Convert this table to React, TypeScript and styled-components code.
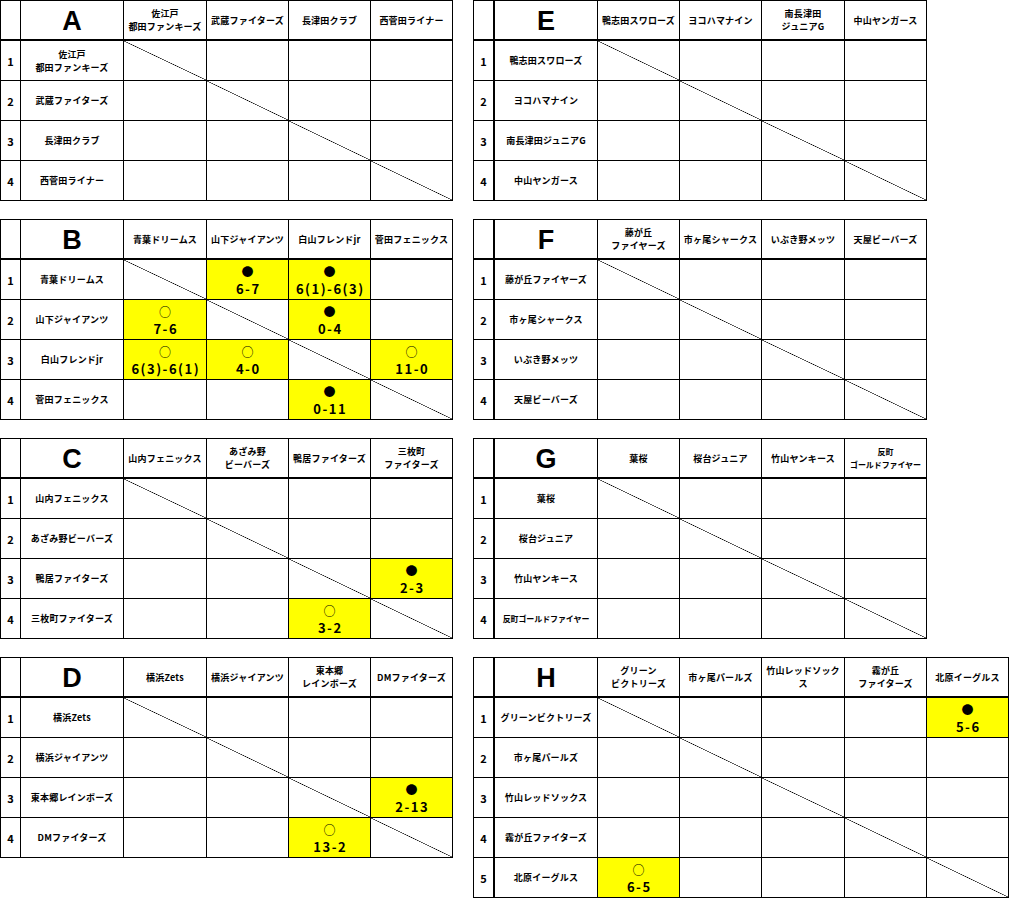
import React from "react";
import styled, { createGlobalStyle, css } from "styled-components";

const GlobalStyle = createGlobalStyle`
  html, body { margin: 0; padding: 0; background: #ffffff; }
  body {
    font-family: "Noto Sans CJK JP", "Noto Sans", sans-serif;
    color: #000000;
    width: 1010px;
  }
`;

type Mark = "win" | "lose";
type Result = { mark: Mark; score: string };
type Team = { head: string[]; row: string[]; small?: boolean };
type GroupData = {
  letter: string;
  teams: Team[];
  results: Record<string, Result>;
};

const t = (name: string, head?: string[], row?: string[], small?: boolean): Team => ({
  head: head ?? [name],
  row: row ?? [name],
  small,
});

const leftGroups: GroupData[] = [
  {
    letter: "A",
    teams: [
      t("佐江戸都田ファンキーズ", ["佐江戸", "都田ファンキーズ"], ["佐江戸", "都田ファンキーズ"]),
      t("武蔵ファイターズ"),
      t("長津田クラブ"),
      t("西菅田ライナー"),
    ],
    results: {},
  },
  {
    letter: "B",
    teams: [t("青葉ドリームス"), t("山下ジャイアンツ"), t("白山フレンドjr"), t("菅田フェニックス")],
    results: {
      "0-1": { mark: "lose", score: "6-7" },
      "0-2": { mark: "lose", score: "6(1)-6(3)" },
      "1-0": { mark: "win", score: "7-6" },
      "1-2": { mark: "lose", score: "0-4" },
      "2-0": { mark: "win", score: "6(3)-6(1)" },
      "2-1": { mark: "win", score: "4-0" },
      "2-3": { mark: "win", score: "11-0" },
      "3-2": { mark: "lose", score: "0-11" },
    },
  },
  {
    letter: "C",
    teams: [
      t("山内フェニックス"),
      t("あざみ野ビーバーズ", ["あざみ野", "ビーバーズ"]),
      t("鴨居ファイターズ"),
      t("三枚町ファイターズ", ["三枚町", "ファイターズ"]),
    ],
    results: {
      "2-3": { mark: "lose", score: "2-3" },
      "3-2": { mark: "win", score: "3-2" },
    },
  },
  {
    letter: "D",
    teams: [
      t("横浜Zets"),
      t("横浜ジャイアンツ"),
      t("東本郷レインボーズ", ["東本郷", "レインボーズ"]),
      t("DMファイターズ"),
    ],
    results: {
      "2-3": { mark: "lose", score: "2-13" },
      "3-2": { mark: "win", score: "13-2" },
    },
  },
];

const rightGroups: GroupData[] = [
  {
    letter: "E",
    teams: [
      t("鴨志田スワローズ"),
      t("ヨコハマナイン"),
      t("南長津田ジュニアG", ["南長津田", "ジュニアG"]),
      t("中山ヤンガース"),
    ],
    results: {},
  },
  {
    letter: "F",
    teams: [
      t("藤が丘ファイヤーズ", ["藤が丘", "ファイヤーズ"]),
      t("市ヶ尾シャークス"),
      t("いぶき野メッツ"),
      t("天屋ビーバーズ"),
    ],
    results: {},
  },
  {
    letter: "G",
    teams: [
      t("葉桜"),
      t("桜台ジュニア"),
      t("竹山ヤンキース"),
      t("反町ゴールドファイヤー", ["反町", "ゴールドファイヤー"], undefined, true),
    ],
    results: {},
  },
  {
    letter: "H",
    teams: [
      t("グリーンビクトリーズ", ["グリーン", "ビクトリーズ"]),
      t("市ヶ尾パールズ"),
      t("竹山レッドソックス", ["竹山レッドソック", "ス"]),
      t("霧が丘ファイターズ", ["霧が丘", "ファイターズ"]),
      t("北原イーグルス"),
    ],
    results: {
      "0-4": { mark: "lose", score: "5-6" },
      "4-0": { mark: "win", score: "6-5" },
    },
  },
];

const Page = styled.div`
  display: grid;
  grid-template-columns: 453px 537px;
  column-gap: 20px;
  align-items: start;
`;

const Column = styled.div`
  display: flex;
  flex-direction: column;
  gap: 18px;
`;

const Table = styled.div<{ $cols: string }>`
  display: grid;
  grid-template-columns: ${(p) => p.$cols};
  grid-auto-rows: 40px;
  width: fit-content;
  border-top: 1px solid #000;
  border-left: 1px solid #000;
`;

const Cell = styled.div`
  box-sizing: border-box;
  border-right: 1px solid #000;
  border-bottom: 1px solid #000;
  display: flex;
  flex-direction: column;
  align-items: center;
  justify-content: center;
  text-align: center;
  min-width: 0;
  overflow: hidden;
`;

const HeadCell = styled(Cell)<{ $thickRight?: boolean }>`
  border-bottom-width: 2px;
  ${(p) => p.$thickRight && css`border-right-width: 2px;`}
`;

const LetterCell = styled(HeadCell)`
  font-family: "Liberation Sans", "DejaVu Sans", sans-serif;
  font-weight: 700;
  font-size: 27px;
  line-height: 1;
  padding-top: 2px;
`;

const NumCell = styled(Cell)<{ $thickRight?: boolean }>`
  font-family: "Noto Sans CJK JP", sans-serif;
  font-weight: 700;
  font-size: 11px;
  ${(p) => p.$thickRight && css`border-right-width: 2px;`}
`;

const NameLine = styled.span<{ $small?: boolean }>`
  display: block;
  font-size: 9px;
  font-weight: 700;
  line-height: 13px;
  white-space: nowrap;
  letter-spacing: 0.2px;
  ${(p) =>
    p.$small &&
    css`
      font-size: 8px;
      letter-spacing: -0.1px;
    `}
`;

const MatchCell = styled(Cell)<{ $filled?: boolean; $diag?: boolean }>`
  ${(p) =>
    p.$filled &&
    css`
      background: #ffff00;
    `}
  ${(p) =>
    p.$diag &&
    css`
      background: linear-gradient(
        to top right,
        transparent calc(50% - 0.6px),
        #000 50%,
        transparent calc(50% + 0.6px)
      );
    `}
`;

const MarkText = styled.span`
  display: block;
  font-size: 12px;
  line-height: 17px;
  height: 17px;
`;

const ScoreText = styled.span`
  display: block;
  font-size: 13px;
  font-weight: 700;
  line-height: 17px;
  letter-spacing: 1.5px;
  margin-right: -1.5px;
  white-space: nowrap;
`;

const Names = ({ lines, small }: { lines: string[]; small?: boolean }) => (
  <>
    {lines.map((l, i) => (
      <NameLine key={i} $small={small}>
        {l}
      </NameLine>
    ))}
  </>
);

const Group = ({ data, side }: { data: GroupData; side: "left" | "right" }) => {
  const n = data.teams.length;
  const thick = side === "right";
  const oppCols =
    side === "left"
      ? ["83px", "82px", "82px", "82px"]
      : ["82px", "82px", "83px", "82px", "82px"];
  const cols = [thick ? "21px" : "20px", "103px", ...oppCols.slice(0, n)].join(" ");
  return (
    <Table $cols={cols}>
      <HeadCell $thickRight={thick} />
      <LetterCell>{data.letter}</LetterCell>
      {data.teams.map((tm, i) => (
        <HeadCell key={`h${i}`}>
          <Names lines={tm.head} small={tm.small} />
        </HeadCell>
      ))}
      {data.teams.map((tm, r) => (
        <React.Fragment key={`r${r}`}>
          <NumCell $thickRight={thick}>{r + 1}</NumCell>
          <Cell>
            <Names lines={tm.row} small={tm.small} />
          </Cell>
          {data.teams.map((_, c) => {
            const res = data.results[`${r}-${c}`];
            return (
              <MatchCell key={c} $diag={r === c} $filled={!!res}>
                {res && (
                  <>
                    <MarkText>{res.mark === "win" ? "○" : "●"}</MarkText>
                    <ScoreText>{res.score}</ScoreText>
                  </>
                )}
              </MatchCell>
            );
          })}
        </React.Fragment>
      ))}
    </Table>
  );
};

export default function App() {
  return (
    <>
      <GlobalStyle />
      <Page>
        <Column>
          {leftGroups.map((g) => (
            <Group key={g.letter} data={g} side="left" />
          ))}
        </Column>
        <Column>
          {rightGroups.map((g) => (
            <Group key={g.letter} data={g} side="right" />
          ))}
        </Column>
      </Page>
    </>
  );
}
